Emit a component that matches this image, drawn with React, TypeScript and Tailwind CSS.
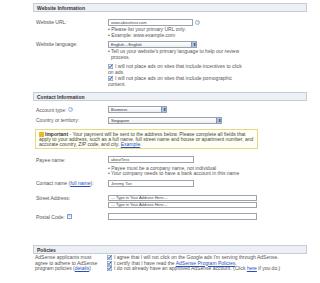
import React from "react";

const Header = ({ title, className = "" }: { title: string; className?: string }) => (
  <div className={"h-[9px] border border-[#c5ced8] bg-[#eceff3] pl-[3px] flex items-center font-bold text-[#333] " + className}>
    {title}
  </div>
);

const Help = ({ boxed }: { boxed?: boolean }) =>
  boxed ? (
    <span className="inline-flex items-center justify-center w-[5px] h-[5px] border border-[#7b9fd4] text-[#5b83c8] text-[4px] leading-none ml-[2px]">?</span>
  ) : (
    <span className="inline-flex items-center justify-center w-[5px] h-[5px] rounded-full border border-[#9ab6dd] text-[#7fa1d4] text-[4px] leading-none ml-[2px]">?</span>
  );

const Check = () => (
  <svg width="5" height="5" viewBox="0 0 5 5" className="shrink-0 self-center mr-[2px]">
    <rect x="0.25" y="0.25" width="4.5" height="4.5" fill="#e8eef8" stroke="#6b86b0" strokeWidth="0.5" />
    <path d="M1 2.4 L2 3.6 L4.2 0.8" fill="none" stroke="#2a55a8" strokeWidth="1" />
  </svg>
);

const Input = ({ w, h = "h-[7px]", value = "" }: { w: string; h?: string; value?: string }) => (
  <div className={"border border-[#9da3aa] bg-white pl-[2px] flex items-center text-[4px] text-[#444] " + h + " " + w}>{value}</div>
);

const Select = ({ w, value }: { w: string; value: string }) => (
  <div className={"h-[7px] border border-[#9aa2ab] bg-gradient-to-b from-white to-[#eceff2] pl-[2px] flex items-center justify-between text-[4px] text-[#333] " + w}>
    <span>{value}</span>
    <span className="w-[5px] h-full bg-[#a9c1e4] border-l border-[#7c97c0] flex items-center justify-center text-[4px] text-[#234]">⬍</span>
  </div>
);

const Link = ({ children }: { children: React.ReactNode }) => (
  <span className="text-[#2a4fc0] underline">{children}</span>
);

export default function App() {
  return (
    <div className="w-[320px] h-[283px] bg-white overflow-hidden font-['Liberation_Sans',Arial,sans-serif] text-[5px] leading-[6px] text-[#555]">
      <div className="ml-[33px] w-[274px] pt-[3px]">
        <Header title="Website Information" />

        <div className="grid grid-cols-[72px_1fr] pl-[3px] mt-[7px]">
          <div>Website URL:</div>
          <div>
            <div className="flex items-center">
              <Input w="w-[85px]" value="www.abouttess.com" />
              <Help />
            </div>
            <div>• Please list your primary URL only.</div>
            <div>• Example: www.example.com</div>
          </div>

          <div className="pt-[3px]">Website language:</div>
          <div className="pt-[3px]">
            <Select w="w-[89px]" value="English – English" />
            <div>• Tell us your website's primary language to help our review</div>
            <div className="pl-[3px]">process.</div>
            <div className="flex mt-[3px]"><Check /><span>I will not place ads on sites that include incentives to click</span></div>
            <div>on ads.</div>
            <div className="flex"><Check /><span>I will not place ads on sites that include pornographic</span></div>
            <div>content.</div>
          </div>
        </div>

        <Header title="Contact Information" className="mt-[5px]" />

        <div className="grid grid-cols-[72px_1fr] pl-[3px] mt-[5px]">
          <div className="flex items-center">Account type: <Help /></div>
          <div><Select w="w-[59px]" value="Business" /></div>

          <div className="pt-[4px]">Country or territory:</div>
          <div className="pt-[4px]"><Select w="w-[114px]" value="Singapore" /></div>
        </div>

        <div className="ml-[2px] mt-[5px] w-[223px] border border-[#e3d98a] bg-[#fffff4] px-[3px] pt-[2px] pb-[1px] leading-[5px] text-[#444]">
          <span className="inline-block w-[5px] h-[5px] bg-[#e8b82a] align-[-1px] mr-[1px]"></span>
          <b className="text-[#333]">Important</b> - Your payment will be sent to the address below. Please complete all fields that apply to your address, such as a full name, full street name and house or apartment number, and accurate country, ZIP code, and city. <Link>Example</Link>.
        </div>

        <div className="grid grid-cols-[72px_1fr] pl-[3px] mt-[7px]">
          <div className="pt-[1px]">Payee name:</div>
          <div>
            <Input w="w-[86px]" value="aboutTess" />
            <div className="mt-[3px] leading-[5px]">• Payee must be a company name, not individual</div>
            <div className="leading-[5px]">• Your company needs to have a bank account in this name</div>
          </div>

          <div className="pt-[4px]">Contact name (<Link>full name</Link>):</div>
          <div className="pt-[4px]"><Input w="w-[86px]" value="Jeremy Tan" /></div>

          <div className="pt-[8px]">Street Address:</div>
          <div className="pt-[8px]">
            <Input w="w-[149px]" h="h-[6px]" value="--- Type in Your Address Here---" />
            <Input w="w-[149px] mt-[1px]" h="h-[6px]" value="--- Type in Your Address Here---" />
          </div>

          <div className="pt-[5px] flex items-center">Postal Code: <Help boxed /></div>
          <div className="pt-[5px]"><Input w="w-[149px]" /></div>
        </div>

        <Header title="Policies" className="mt-[25px]" />

        <div className="grid grid-cols-[72px_1fr] pl-[2px] mt-[1px] leading-[5.5px]">
          <div className="pr-[2px]">AdSense applicants must agree to adhere to AdSense program policies (<Link>details</Link>)</div>
          <div>
            <div className="flex"><Check /><span>I agree that I will not click on the Google ads I'm serving through AdSense.</span></div>
            <div className="flex"><Check /><span>I certify that I have read the <Link>AdSense Program Policies</Link>.</span></div>
            <div className="flex"><Check /><span>I do not already have an approved AdSense account. (Click <Link>here</Link> if you do.)</span></div>
          </div>
        </div>
      </div>
    </div>
  );
}
